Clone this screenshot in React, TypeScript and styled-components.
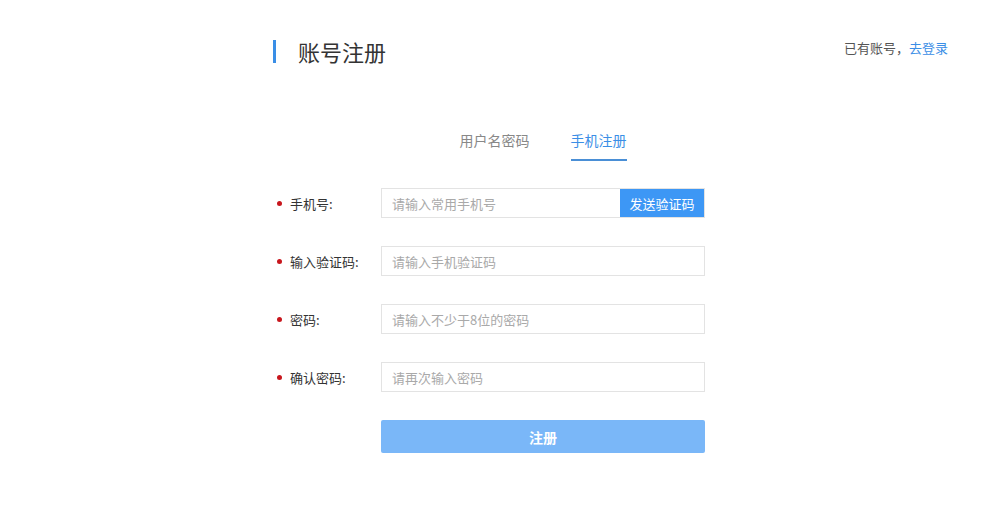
import React, { FC, useState } from 'react';
import styled, { createGlobalStyle } from 'styled-components';

const GlobalStyle = createGlobalStyle`
  html, body {
    margin: 0;
    padding: 0;
    background: #fff;
    font-family: "Microsoft YaHei", "Noto Sans CJK SC", "Noto Sans", sans-serif;
    color: #333;
  }
  * { box-sizing: border-box; }
`;

const Page = styled.div`
  width: 676px;
  margin-left: 273px;
  padding-top: 40px;
`;

const Header = styled.div`
  display: flex;
  justify-content: space-between;
  align-items: flex-start;
`;

const TitleWrap = styled.div`
  display: flex;
  align-items: center;
  gap: 22px;
  height: 23px;
`;

const TitleBar = styled.span`
  width: 3px;
  height: 23px;
  background: #3a8ee6;
`;

const Title = styled.h1`
  margin: 0;
  font-size: 22px;
  font-weight: normal;
  color: #333;
  line-height: 23px;
`;

const LoginHint = styled.div`
  font-size: 13px;
  color: #555;
  line-height: 16px;
  margin-right: 1px;

  a {
    color: #3a8ee6;
    text-decoration: none;
  }
`;

const Tabs = styled.div`
  display: flex;
  justify-content: center;
  gap: 41px;
  margin: 68px 0 0 108px;
  width: 324px;
`;

const Tab = styled.div<{ $active?: boolean }>`
  font-size: 14px;
  line-height: 18px;
  padding-bottom: 10px;
  color: ${p => (p.$active ? '#3a8ee6' : '#888')};
  border-bottom: 2px solid ${p => (p.$active ? '#4a8fd6' : 'transparent')};
  cursor: pointer;
`;

const Form = styled.form`
  display: flex;
  flex-direction: column;
  gap: 28px;
  margin-top: 27px;
`;

const Row = styled.div`
  display: flex;
  align-items: center;
`;

const Label = styled.label`
  width: 108px;
  display: flex;
  align-items: center;
  font-size: 13px;
  color: #333;

  &::before {
    content: '';
    width: 5px;
    height: 5px;
    border-radius: 50%;
    background: #c8161d;
    margin: 0 8px 0 4px;
  }
`;

const InputBox = styled.div`
  width: 324px;
  height: 30px;
  border: 1px solid #e3e3e3;
  display: flex;
  align-items: stretch;
  padding: 0;
`;

const Input = styled.input`
  flex: 1;
  min-width: 0;
  border: none;
  outline: none;
  padding: 0 10px;
  font-size: 13px;
  font-family: inherit;
  color: #333;

  &::placeholder {
    color: #a9a9a9;
  }
`;

const SendButton = styled.button`
  width: 84px;
  border: none;
  background: #3d97f5;
  color: #fff;
  font-size: 13px;
  font-family: inherit;
  padding: 0;
  cursor: pointer;
`;

const Submit = styled.button`
  margin-left: 108px;
  width: 324px;
  height: 33px;
  border: none;
  border-radius: 2px;
  background: #7ab7f8;
  color: #fff;
  font-size: 14px;
  font-weight: bold;
  font-family: inherit;
  cursor: pointer;
`;

const fields = [
  { label: '输入验证码:', placeholder: '请输入手机验证码', type: 'text' },
  { label: '密码:', placeholder: '请输入不少于8位的密码', type: 'password' },
  { label: '确认密码:', placeholder: '请再次输入密码', type: 'password' },
];

const App: FC = () => {
  const [tab, setTab] = useState(1);
  return (
    <Page>
      <GlobalStyle />
      <Header>
        <TitleWrap>
          <TitleBar />
          <Title>账号注册</Title>
        </TitleWrap>
        <LoginHint>
          已有账号，<a href="#">去登录</a>
        </LoginHint>
      </Header>

      <Tabs>
        <Tab $active={tab === 0} onClick={() => setTab(0)}>
          用户名密码
        </Tab>
        <Tab $active={tab === 1} onClick={() => setTab(1)}>
          手机注册
        </Tab>
      </Tabs>

      <Form onSubmit={e => e.preventDefault()}>
        <Row>
          <Label>手机号:</Label>
          <InputBox>
            <Input placeholder="请输入常用手机号" />
            <SendButton type="button">发送验证码</SendButton>
          </InputBox>
        </Row>
        {fields.map(f => (
          <Row key={f.label}>
            <Label>{f.label}</Label>
            <InputBox>
              <Input type={f.type} placeholder={f.placeholder} />
            </InputBox>
          </Row>
        ))}
        <Submit type="submit">注册</Submit>
      </Form>
    </Page>
  );
};

export default App;
